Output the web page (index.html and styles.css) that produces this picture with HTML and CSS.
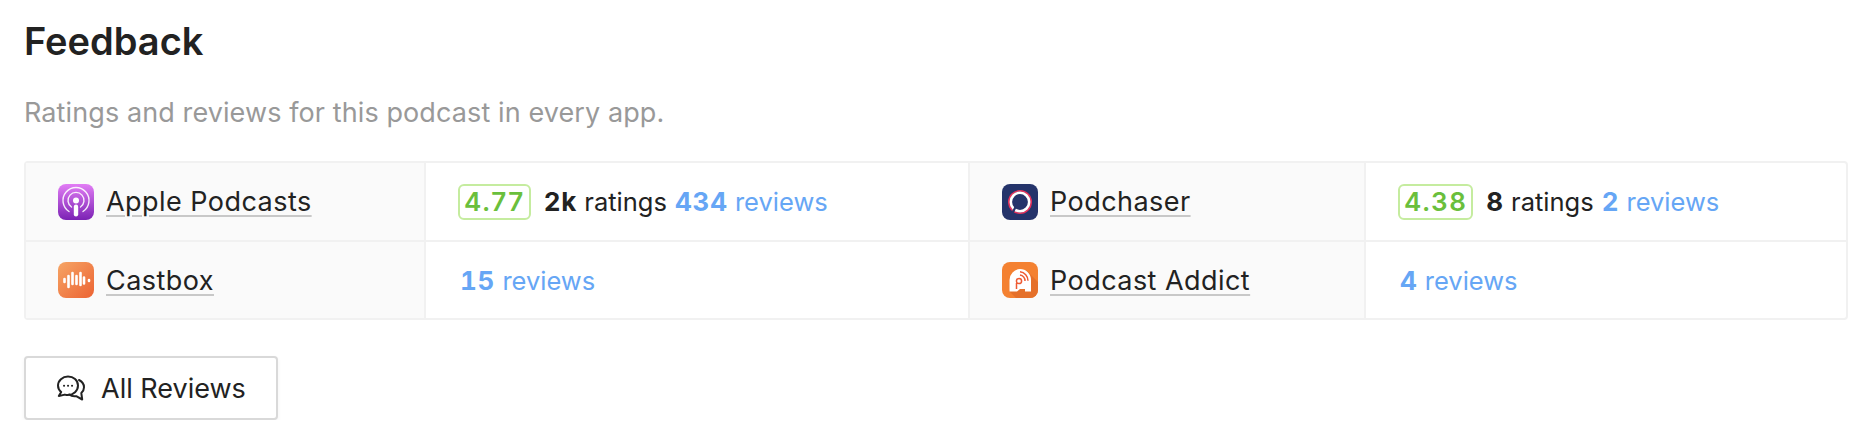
FILE: index.html
```html
<!DOCTYPE html>
<html lang="en">
  <head>
    <meta charset="UTF-8" />
    <title>Feedback</title>
    <link rel="stylesheet" href="styles.css">
  </head>
  <body>
    <main class="feedback">
      <h2>Feedback</h2>
      <p class="sub">Ratings and reviews for this podcast in every app.</p>
      <div class="table">
        <div class="cell name">
          <svg class="app" viewBox="0 0 36 36">
            <defs>
              <linearGradient id="apple" x1="0" y1="0" x2="0" y2="1">
                <stop offset="0" stop-color="#e27df5" />
                <stop offset="1" stop-color="#7b22b4" />
              </linearGradient>
            </defs>
            <rect width="36" height="36" rx="8" fill="url(#apple)" />
            <g fill="none" stroke="#fff" stroke-width="1.4" stroke-linecap="round" opacity="0.9">
              <path d="M11 27.500a13 13 0 1 1 14 0" />
              <path d="M13.500 23a8 8 0 1 1 9 0" />
            </g>
            <circle cx="18" cy="16.500" r="3" fill="#fff" />
            <rect x="15.800" y="20.500" width="4.400" height="12" rx="2.200" fill="#fff" />
          </svg>
          <a href="#">Apple Podcasts</a>
        </div>
        <div class="cell stats">
          <span class="score">4.77</span>
          <span class="ratings"><b>2k</b> ratings</span>
          <span class="reviews"><b>434</b> reviews</span>
        </div>
        <div class="cell name">
          <svg class="app" viewBox="0 0 36 36">
            <rect width="36" height="36" rx="8" fill="#24336a" />
            <circle cx="18" cy="18" r="11.200" fill="none" stroke="#e8325c" stroke-width="1.600" />
            <circle cx="18" cy="18" r="9.200" fill="none" stroke="#fff" stroke-width="2.600" />
            <path d="M13.500 23L11 28" stroke="#24336a" stroke-width="2.200" />
          </svg>
          <a href="#">Podchaser</a>
        </div>
        <div class="cell stats">
          <span class="score">4.38</span>
          <span class="ratings"><b>8</b> ratings</span>
          <span class="reviews"><b>2</b> reviews</span>
        </div>
        <div class="cell name last">
          <svg class="app" viewBox="0 0 36 36">
            <defs>
              <linearGradient id="castbox" x1="0" y1="0" x2="1" y2="1">
                <stop offset="0" stop-color="#f6a565" />
                <stop offset="1" stop-color="#ec6333" />
              </linearGradient>
            </defs>
            <rect width="36" height="36" rx="8" fill="url(#castbox)" />
            <g stroke="#fff" stroke-width="2.600" stroke-linecap="round">
              <path d="M6.500 17v3M10.500 14v11M14.500 11v11M18.500 14v8M22.500 11v12M26 15.500v6M31 18v1" />
            </g>
          </svg>
          <a href="#">Castbox</a>
        </div>
        <div class="cell stats last">
          <span class="reviews only"><b>15</b> reviews</span>
        </div>
        <div class="cell name last">
          <svg class="app" viewBox="0 0 36 36">
            <rect width="36" height="36" rx="8" fill="#f48131" />
            <path d="M14 36L7 29 24 8l12 12v8a8 8 0 0 1-8 8z" fill="#e5702a" />
            <path d="M18 7a11 11 0 0 1 11 11v11.500H23v-2.500h-5l-3 2.500H7.500V18A11 11 0 0 1 18 7z" fill="#fff" />
            <g fill="none" stroke="#ee5a33" stroke-width="1.500">
              <circle cx="17" cy="19" r="2.600" />
              <path d="M18 13a6 6 0 0 1 5 6M18 9.800a9 9 0 0 1 8 9M14.500 21v6" />
            </g>
          </svg>
          <a href="#">Podcast Addict</a>
        </div>
        <div class="cell stats last">
          <span class="reviews only"><b>4</b> reviews</span>
        </div>
      </div>
      <button class="btn" type="button">
        <svg class="chat" viewBox="0 0 28 26" fill="none" stroke="#222" stroke-width="2" stroke-linejoin="round" stroke-linecap="round">
          <path d="M11 1.500C5.500 1.500 1 5.600 1 10.600c0 2.600 1.200 4.900 3.200 6.500L1.800 21l6-1.400c1 .3 2.100.5 3.200.5 5.500 0 10-4.300 10-9.500S16.500 1.500 11 1.500z" />
          <path d="M22 5c3 1.500 5 4 5 7.200 0 2.300-1 4.300-2.700 5.800l.9 6.500-6-3.300c-2.800.4-5.200-.2-7-1.700" />
          <path d="M7 10.800h.1M11 10.800h.1M15 10.800h.1" />
        </svg>
        All Reviews
      </button>
    </main>
  </body>
</html>
```

FILE: styles.css
```css
* {
  box-sizing: border-box;
}

body {
  margin: 0;
  background: #fff;
  color: #222;
  font-family: Inter, "Liberation Sans", sans-serif;
}

.feedback {
  padding: 19px 28px 0 24px;
}

h2 {
  margin: 0;
  font-size: 38px;
  font-weight: 600;
  line-height: 44px;
}

.sub {
  margin: 34px 0 0;
  color: #999;
  font-size: 27px;
  letter-spacing: 0.1px;
  line-height: 32px;
}

.table {
  display: grid;
  grid-template-columns: 400px 544px 396px 1fr;
  margin-top: 32px;
  border: 2px solid #f1f1f1;
  border-radius: 4px;
}

.cell {
  display: flex;
  align-items: center;
  height: 79px;
  border-bottom: 2px solid #f1f1f1;
  font-size: 25.5px;
}

.cell.last {
  border-bottom: 0;
  height: 76px;
}

.name {
  gap: 12px;
  padding-left: 32px;
  background: #fafafa;
  border-right: 2px solid #f1f1f1;
}

.stats {
  padding-left: 32px;
  border-right: 2px solid #f1f1f1;
}

.stats:nth-child(4n) {
  border-right: 0;
}

.app {
  flex: none;
  width: 36px;
  height: 36px;
}

.name a {
  color: #222;
  font-size: 27px;
  letter-spacing: 0.45px;
  text-decoration: underline 2px #c8c8c8;
  text-underline-offset: 4px;
}

.score {
  padding: 0 4px;
  border: 2px solid #c5ec9f;
  border-radius: 6px;
  color: #6abf3c;
  font-size: 26px;
  font-weight: 600;
  letter-spacing: 1.5px;
  line-height: 32px;
}

.ratings {
  margin-left: 13px;
}

.ratings b,
.reviews b {
  font-size: 26px;
  font-variant-numeric: tabular-nums;
  font-weight: 700;
  letter-spacing: 0.8px;
}

.reviews {
  margin-left: 8px;
  color: #66a6f5;
}

.reviews.only {
  margin-left: 2px;
}

.btn {
  display: flex;
  align-items: center;
  gap: 16px;
  width: 254px;
  height: 64px;
  margin-top: 36px;
  padding: 0 0 0 31px;
  background: #fff;
  border: 2px solid #d9d9d9;
  border-radius: 4px;
  box-shadow: 0 2px 4px rgba(0, 0, 0, 0.05);
  color: #222;
  font-family: inherit;
  font-size: 27px;
}

.chat {
  flex: none;
  width: 28px;
  height: 26px;
}
```
